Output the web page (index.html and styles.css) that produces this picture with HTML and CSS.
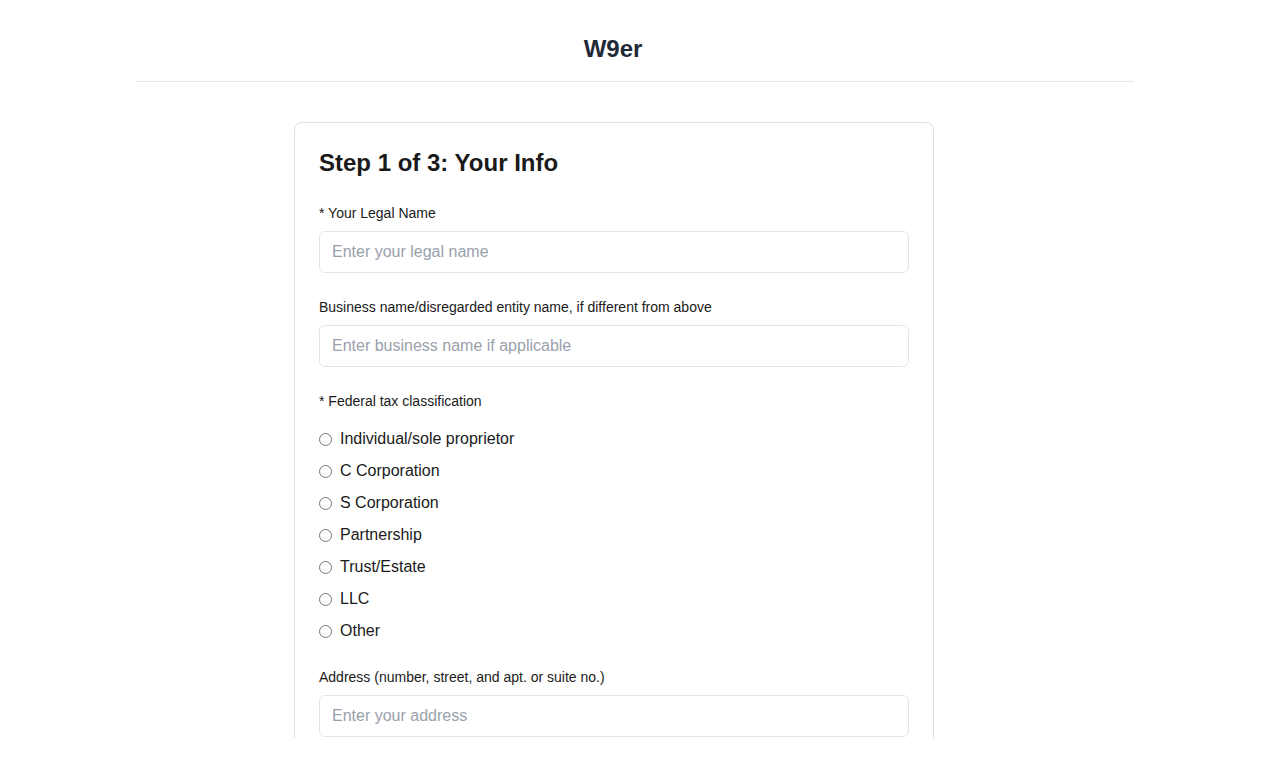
FILE: index.html
```html
<!DOCTYPE html>
<html lang="en">
<head>
<meta charset="utf-8">
<title>W9er</title>
<link rel="stylesheet" href="styles.css">
</head>
<body>
<div class="viewport">
  <header class="site-header">
    <h1 class="brand">W9er</h1>
  </header>
  <main class="main">
    <section class="card">
      <h2 class="card-title">Step 1 of 3: Your Info</h2>
      <div class="field">
        <label class="label" for="legal">* Your Legal Name</label>
        <input class="input" id="legal" type="text" placeholder="Enter your legal name">
      </div>
      <div class="field">
        <label class="label" for="biz">Business name/disregarded entity name, if different from above</label>
        <input class="input" id="biz" type="text" placeholder="Enter business name if applicable">
      </div>
      <div class="field">
        <div class="label legend">* Federal tax classification</div>
        <div class="radios">
          <label class="radio"><input type="radio" name="tax"><span>Individual/sole proprietor</span></label>
          <label class="radio"><input type="radio" name="tax"><span>C Corporation</span></label>
          <label class="radio"><input type="radio" name="tax"><span>S Corporation</span></label>
          <label class="radio"><input type="radio" name="tax"><span>Partnership</span></label>
          <label class="radio"><input type="radio" name="tax"><span>Trust/Estate</span></label>
          <label class="radio"><input type="radio" name="tax"><span>LLC</span></label>
          <label class="radio"><input type="radio" name="tax"><span>Other</span></label>
        </div>
      </div>
      <div class="field">
        <label class="label" for="addr">Address (number, street, and apt. or suite no.)</label>
        <input class="input" id="addr" type="text" placeholder="Enter your address">
      </div>
    </section>
  </main>
</div>
</body>
</html>
```

FILE: styles.css
```css
html, body {
  margin: 0;
  padding: 0;
  background: #ffffff;
}
body {
  font-family: "Liberation Sans", Arial, Helvetica, sans-serif;
  color: #1a1a1a;
}
.viewport {
  height: 738px;
  overflow: hidden;
}
.site-header {
  width: 998px;
  margin: 0 auto;
  padding-top: 33px;
  padding-bottom: 16px;
  border-bottom: 1px solid #e5e5e5;
  display: flex;
  justify-content: center;
}
.brand {
  margin: 0 44px 0 0;
  font-size: 24px;
  line-height: 32px;
  font-weight: 700;
  color: #1f2937;
}
.main {
  display: flex;
  justify-content: center;
  padding-right: 42px;
  padding-top: 40px;
}
.card {
  width: 590px;
  border: 1px solid #e0e0e0;
  border-radius: 8px;
  padding: 24px;
  display: flex;
  flex-direction: column;
  gap: 24px;
}
.card-title {
  margin: 0;
  font-size: 24px;
  line-height: 32px;
  font-weight: 700;
  color: #1a1a1a;
}
.field {
  display: flex;
  flex-direction: column;
}
.label {
  font-size: 14px;
  line-height: 20px;
  color: #1a1a1a;
  margin-bottom: 8px;
}
.legend {
  margin-bottom: 16px;
}
.input {
  box-sizing: border-box;
  width: 100%;
  height: 42px;
  padding: 0 12px;
  border: 1px solid #e2e4e8;
  border-radius: 6px;
  font-family: "Liberation Sans", Arial, Helvetica, sans-serif;
  font-size: 16px;
  color: #1a1a1a;
  background: #ffffff;
  outline: none;
}
.input::placeholder {
  color: #9aa1ac;
}
.radios {
  display: flex;
  flex-direction: column;
  gap: 8px;
}
.radio {
  display: flex;
  align-items: center;
  gap: 8px;
  height: 24px;
  font-size: 16px;
  line-height: 24px;
  color: #1a1a1a;
}
.radio input {
  margin: 0;
  width: 13px;
  height: 13px;
}
```
